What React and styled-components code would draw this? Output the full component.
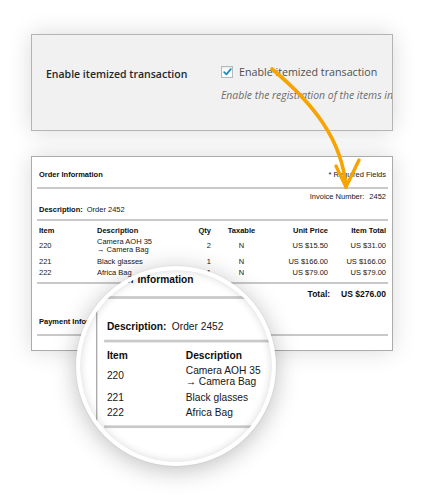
import React from 'react';
import styled, { createGlobalStyle } from 'styled-components';

const Global = createGlobalStyle`
  html, body { margin: 0; padding: 0; background: #fff; }
  body { width: 421px; height: 495px; overflow: hidden; }
`;

const Page = styled.div`
  position: relative;
  width: 421px;
  height: 495px;
  box-sizing: border-box;
  padding: 34px 28px 0 31px;
  display: flex;
  flex-direction: column;
  gap: 25px;
`;

const SettingsPanel = styled.section`
  height: 97px;
  box-sizing: border-box;
  background: #f1f1f1;
  border: 1px solid #b4b4b4;
  box-shadow: 0 0 22px rgba(0, 0, 0, 0.15);
  overflow: hidden;
  display: grid;
  grid-template-columns: 175px 1fr;
  padding: 29px 0 0 14px;
  font-family: "Open Sans", sans-serif;
`;

const SettingLabel = styled.div`
  font-size: 10.5px;
  font-weight: 600;
  color: #23282d;
  line-height: 16px;
  padding-top: 2px;
  white-space: nowrap;
`;

const Field = styled.div`
  display: flex;
  flex-direction: column;
  min-width: 0;
`;

const CheckRow = styled.label`
  display: flex;
  align-items: center;
  gap: 6px;
  height: 16px;
  font-size: 10.7px;
  color: #4f4f4f;
  white-space: nowrap;
`;

const CheckBox = styled.span`
  width: 12px;
  height: 12px;
  box-sizing: border-box;
  border: 1px solid #b4b9be;
  background: #fff;
  box-shadow: inset 0 1px 2px rgba(0, 0, 0, 0.1);
  display: flex;
  align-items: center;
  justify-content: center;
`;

const Hint = styled.p`
  margin: 8px 0 0;
  font-size: 10.4px;
  font-style: italic;
  color: #6c6c6c;
  line-height: 14px;
  white-space: nowrap;
`;

const OrderBox = styled.section`
  width: 362px;
  height: 195px;
  box-sizing: border-box;
  background: #fff;
  border: 1px solid #ababab;
  box-shadow: ${(p) => (p.$flat ? 'none' : '0 0 22px rgba(0, 0, 0, 0.15)')};
  padding: 0 4px 0 5px;
  font-family: "Liberation Sans", Arial, sans-serif;
  font-size: 7.5px;
  color: #161616;
  display: flex;
  flex-direction: column;
`;

const Row = styled.div`
  display: flex;
  justify-content: ${(p) => p.$justify || 'flex-start'};
  align-items: center;
  gap: ${(p) => p.$gap || 4}px;
  padding: 0 2px;
  margin-top: ${(p) => p.$mt || 0}px;
  height: ${(p) => p.$h || 10}px;
  line-height: ${(p) => p.$h || 10}px;
  font-size: ${(p) => p.$size || 7.5}px;
  white-space: nowrap;
`;

const Strong = styled.span`
  font-weight: 700;
  color: #0d0d0d;
`;

const Divider = styled.div`
  height: 2px;
  background: #c9c9c9;
  margin-top: ${(p) => p.$mt || 0}px;
`;

const ItemTable = styled.table`
  border-collapse: collapse;
  margin: 5px 2px 0;
  table-layout: fixed;
  width: 347px;
`;

const Th = styled.th`
  font-weight: 700;
  color: #0d0d0d;
  padding: 0;
  line-height: 10px;
  text-align: ${(p) => p.$align || 'left'};
`;

const Td = styled.td`
  padding: 1.6px 0;
  line-height: 8.4px;
  vertical-align: middle;
  text-align: ${(p) => p.$align || 'left'};
`;

const Magnifier = styled.div`
  position: absolute;
  left: 76px;
  top: 266px;
  width: 200px;
  height: 200px;
  box-sizing: border-box;
  border: 4px solid #fff;
  border-radius: 50%;
  overflow: hidden;
  background: #fff;
  box-shadow: 0 0 0 1px rgba(0, 0, 0, 0.03), 0 4px 24px rgba(0, 0, 0, 0.26);
  z-index: 3;
  &::after {
    content: '';
    position: absolute;
    inset: 0;
    border-radius: 50%;
    box-shadow: inset 0 0 9px rgba(0, 0, 0, 0.16);
  }
`;

const LensContent = styled.div`
  position: absolute;
  left: 16.2px;
  top: -15.7px;
  transform: scale(1.36);
  transform-origin: 0 0;
`;

const ArrowLayer = styled.svg`
  position: absolute;
  left: 0;
  top: 0;
  width: 421px;
  height: 495px;
  pointer-events: none;
  z-index: 2;
`;

const items = [
  { id: '220', desc: ['Camera AOH 35', '\u2192 Camera Bag'], qty: 2, tax: 'N', unit: 'US $15.50', total: 'US $31.00' },
  { id: '221', desc: ['Black glasses'], qty: 1, tax: 'N', unit: 'US $166.00', total: 'US $166.00' },
  { id: '222', desc: ['Africa Bag'], qty: 1, tax: 'N', unit: 'US $79.00', total: 'US $79.00' },
];

function OrderPanel({ flat }) {
  return (
    <OrderBox $flat={flat}>
      <Row $justify="space-between" $mt={12} $h={12}>
        <Strong>Order Information</Strong>
        <span>* Required Fields</span>
      </Row>
      <Divider $mt={6} />
      <Row $justify="flex-end" $gap={5} $mt={3}>
        <span>Invoice Number:</span>
        <span>2452</span>
      </Row>
      <Row $mt={3}>
        <Strong>Description:</Strong>
        <span>Order 2452</span>
      </Row>
      <Divider $mt={4} />
      <ItemTable>
        <colgroup>
          <col style={{ width: 58 }} />
          <col style={{ width: 83 }} />
          <col style={{ width: 31 }} />
          <col style={{ width: 61 }} />
          <col style={{ width: 56 }} />
          <col style={{ width: 58 }} />
        </colgroup>
        <thead>
          <tr>
            <Th>Item</Th>
            <Th>Description</Th>
            <Th $align="right">Qty</Th>
            <Th $align="center">Taxable</Th>
            <Th $align="right">Unit Price</Th>
            <Th $align="right">Item Total</Th>
          </tr>
        </thead>
        <tbody>
          {items.map((it) => (
            <tr key={it.id}>
              <Td>{it.id}</Td>
              <Td>
                {it.desc.map((d, i) => (
                  <div key={i}>{d}</div>
                ))}
              </Td>
              <Td $align="right">{it.qty}</Td>
              <Td $align="center">{it.tax}</Td>
              <Td $align="right">{it.unit}</Td>
              <Td $align="right">{it.total}</Td>
            </tr>
          ))}
        </tbody>
      </ItemTable>
      <Divider $mt={3} />
      <Row $justify="flex-end" $gap={11} $mt={4} $h={12} $size={8.5}>
        <Strong>Total:</Strong>
        <Strong>US $276.00</Strong>
      </Row>
      <Row $mt={17}>
        <Strong>Payment Information</Strong>
      </Row>
      <Divider $mt={7} />
    </OrderBox>
  );
}

export default function App() {
  return (
    <>
      <Global />
      <Page>
        <SettingsPanel>
          <SettingLabel>Enable itemized transaction</SettingLabel>
          <Field>
            <CheckRow>
              <CheckBox>
                <svg width="9" height="8" viewBox="0 0 9 8">
                  <path d="M1.2 4.2 L3.4 6.4 L7.8 1.2" fill="none" stroke="#1e8cbe" strokeWidth="1.8" strokeLinecap="round" strokeLinejoin="round" />
                </svg>
              </CheckBox>
              Enable itemized transaction
            </CheckRow>
            <Hint>Enable the registration of the items in the transaction details</Hint>
          </Field>
        </SettingsPanel>
        <OrderPanel />
        <ArrowLayer viewBox="0 0 421 495">
          <g fill="none" stroke="#f8a400" strokeLinecap="round" strokeLinejoin="round">
            <path d="M272 69 C314 104 342 140 346 187" strokeWidth="3.6" />
            <path d="M336 166 L346 187 L359 160" strokeWidth="3.4" />
          </g>
        </ArrowLayer>
        <Magnifier>
          <LensContent>
            <OrderPanel flat />
          </LensContent>
        </Magnifier>
      </Page>
    </>
  );
}
